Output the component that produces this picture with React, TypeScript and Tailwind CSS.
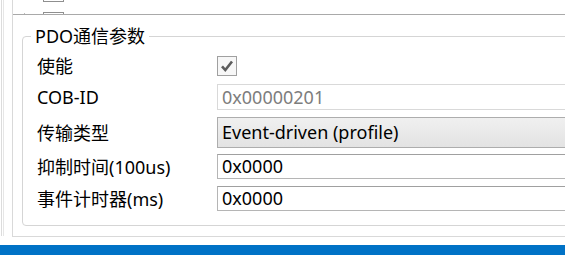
import React from "react";

const font = { fontFamily: '"Noto Sans", "Noto Sans CJK SC", sans-serif' };

function Row({ label, children, className = "" }: { label: string; children: React.ReactNode; className?: string }) {
  return (
    <div className={`flex items-center ${className}`}>
      <div className="w-[181px] shrink-0 pl-[1px] text-[18px] leading-none text-[#000]">{label}</div>
      <div className="flex-1 h-full flex items-center">{children}</div>
    </div>
  );
}

export default function App() {
  return (
    <div className="w-[565px] h-[255px] bg-white overflow-hidden flex flex-col" style={font}>
      <div className="h-[245px] flex shrink-0">
        {/* outer left double line */}
        <div className="w-[1px] shrink-0" />
        <div className="w-[1px] shrink-0 h-[236px] bg-[#dcdcdc]" />
        <div className="w-[1px] shrink-0" />
        <div className="w-[1px] shrink-0 h-[236px] bg-[#e6e6e6]" />
        <div className="w-[8px] shrink-0" />
        {/* panel */}
        <div className="w-[600px] shrink-0 h-[237px] border-l border-b border-[#d9d9d9] flex flex-col">
          <div className="h-[14px] relative">
            <div className="absolute left-[30px] top-0 w-[21px] h-[2px] border-x border-b border-[#8f8f8f]" />
            <div className="absolute left-[30px] top-[12px] w-[21px] h-[2px] border-x border-t border-[#8f8f8f]" />
            <div className="absolute left-[11px] top-[13px] w-[1px] h-[1px] bg-[#bbbbbb]" />
          </div>
          <div className="border-t border-[#a9a9a9]" />
          <div className="pl-[9px] pt-[21px]">
            <div className="relative w-[600px] border border-[#d5d5d5] rounded-[4px] pt-[19px] pb-[14px] pl-[13px] flex flex-col">
              <div className="absolute left-[8px] -top-[13px] bg-white px-[4px] text-[18px] leading-[24px] text-black">
                PDO通信参数
              </div>
              <Row label="使能" className="h-[20px]">
                <div className="w-[20px] h-[20px] border border-[#a0a0a0] bg-[#f7f7f7] flex items-center justify-center">
                  <svg width="14" height="14" viewBox="0 0 14 14">
                    <path d="M2 7.3 L5.3 11 L12 2.5" fill="none" stroke="#5c5c5c" strokeWidth="2.6" />
                  </svg>
                </div>
              </Row>
              <Row label="COB-ID" className="h-[26px] mt-[8px]">
                <div className="w-full h-[26px] border border-[#d9d9d9] bg-white pl-[4px] flex items-center text-[18px] text-[#7d7d7d]">
                  0x00000201
                </div>
              </Row>
              <Row label="传输类型" className="h-[31px] mt-[7px]">
                <div className="w-full h-[31px] border border-[#adadad] bg-gradient-to-b from-[#f0f0f0] to-[#e3e3e3] pl-[4px] flex items-center text-[18px] text-black">
                  Event-driven (profile)
                </div>
              </Row>
              <Row label="抑制时间(100us)" className="h-[25px] mt-[6px]">
                <div className="w-full h-[25px] border border-[#b5b5b5] border-t-[#a0a0a0] bg-white pl-[4px] flex items-center text-[18px] text-black">
                  0x0000
                </div>
              </Row>
              <Row label="事件计时器(ms)" className="h-[25px] mt-[7px]">
                <div className="w-full h-[25px] border border-[#b5b5b5] border-t-[#a0a0a0] bg-white pl-[4px] flex items-center text-[18px] text-black">
                  0x0000
                </div>
              </Row>
            </div>
          </div>
        </div>
      </div>
      <div className="h-[10px] shrink-0 bg-[#0072c6]" />
    </div>
  );
}
